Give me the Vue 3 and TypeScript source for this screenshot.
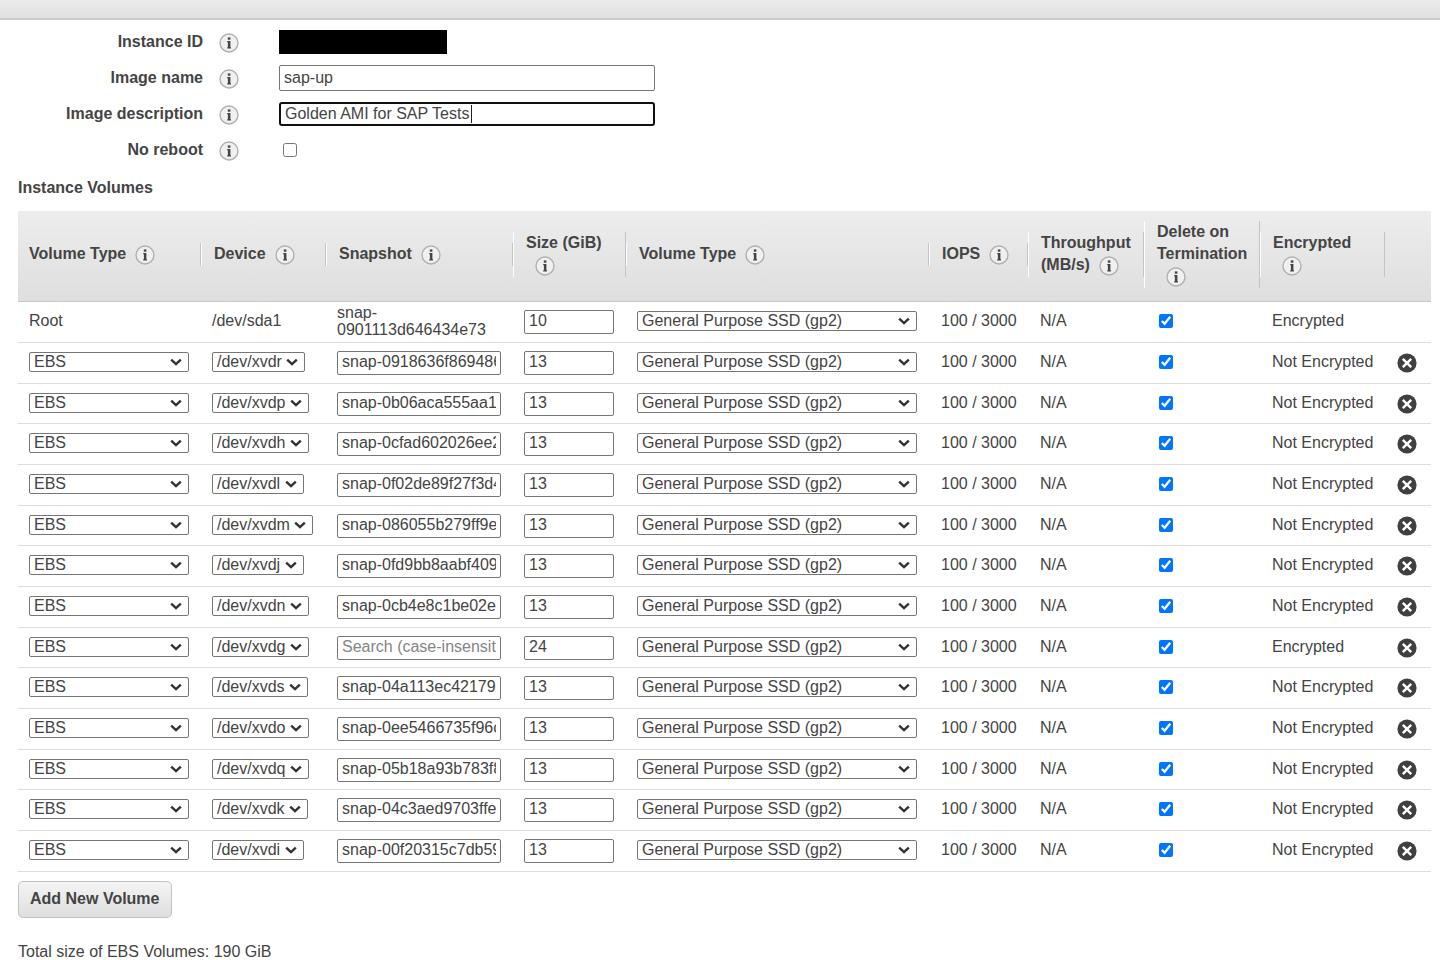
<script setup lang="ts">
import { computed, reactive, ref } from 'vue'

interface Column {
  key: string
  label: string
}

interface Volume {
  device: string
  snapshot: string
  size: string
  remove: boolean
  encrypted: string
}

const columns: Column[] = [
  { key: 'kind', label: 'Volume Type' },
  { key: 'device', label: 'Device' },
  { key: 'snapshot', label: 'Snapshot' },
  { key: 'size', label: 'Size (GiB)' },
  { key: 'type', label: 'Volume Type' },
  { key: 'iops', label: 'IOPS' },
  { key: 'throughput', label: 'Throughput (MB/s)' },
  { key: 'delete', label: 'Delete on Termination' },
  { key: 'encrypted', label: 'Encrypted' },
]

const ebs = (device: string, snapshot: string, size = '13', encrypted = 'Not Encrypted'): Volume => ({
  device,
  snapshot,
  size,
  remove: true,
  encrypted,
})

const root = reactive({ size: '10', remove: true })

const volumes = reactive<Volume[]>([
  ebs('/dev/xvdr', 'snap-0918636f869486'),
  ebs('/dev/xvdp', 'snap-0b06aca555aa1'),
  ebs('/dev/xvdh', 'snap-0cfad602026ee2'),
  ebs('/dev/xvdl', 'snap-0f02de89f27f3d4'),
  ebs('/dev/xvdm', 'snap-086055b279ff9e'),
  ebs('/dev/xvdj', 'snap-0fd9bb8aabf409'),
  ebs('/dev/xvdn', 'snap-0cb4e8c1be02e'),
  ebs('/dev/xvdg', '', '24', 'Encrypted'),
  ebs('/dev/xvds', 'snap-04a113ec42179'),
  ebs('/dev/xvdo', 'snap-0ee5466735f96c'),
  ebs('/dev/xvdq', 'snap-05b18a93b783f8'),
  ebs('/dev/xvdk', 'snap-04c3aed9703ffe'),
  ebs('/dev/xvdi', 'snap-00f20315c7db59'),
])

const imageName = ref('sap-up')
const description = ref('Golden AMI for SAP Tests')
const noReboot = ref(false)

// The caret is drawn at the end of the description text.
const pen = document.createElement('canvas').getContext('2d')
const caretOffset = computed(() => {
  if (!pen) return 0
  pen.font = '16px "Liberation Sans", Arial, sans-serif'
  return Math.round(pen.measureText(description.value).width)
})
</script>

<template>
  <svg class="symbols" aria-hidden="true">
    <symbol id="info" viewBox="0 0 20 20">
      <circle cx="10" cy="10" r="9" fill="#f0f0f0" stroke="#b0b0b0" stroke-width="1.4" />
      <path d="M8.2 8h3.2v6.2h.6v1.2H8.2v-1.2h.7V9.2h-.7z" fill="#444" />
      <rect x="8.8" y="4.4" width="2.6" height="2.3" fill="#444" />
    </symbol>
    <symbol id="chevron" viewBox="0 0 12 8">
      <path d="M1.2 1.6 6 6.2l4.8-4.6" fill="none" stroke="#333" stroke-width="2.4" />
    </symbol>
    <symbol id="remove" viewBox="0 0 20 20">
      <circle cx="10" cy="10" r="9.6" fill="#404040" />
      <path d="m5.8 5.8 8.4 8.4m0-8.4-8.4 8.4" stroke="#fff" stroke-width="2.4" />
    </symbol>
  </svg>

  <header class="topbar"></header>
  <main class="page">
    <form class="details" @submit.prevent>
      <span class="label">Instance ID</span>
      <svg class="info"><use href="#info" /></svg>
      <div class="entry"><span class="redacted"></span></div>

      <label class="label" for="image-name">Image name</label>
      <svg class="info"><use href="#info" /></svg>
      <div class="entry"><input id="image-name" v-model="imageName" class="text tall" type="text" /></div>

      <label class="label" for="image-description">Image description</label>
      <svg class="info"><use href="#info" /></svg>
      <div class="entry">
        <input id="image-description" v-model="description" class="text active" type="text" />
        <span class="caret" :style="{ marginLeft: caretOffset + 'px' }"></span>
      </div>

      <label class="label" for="no-reboot">No reboot</label>
      <svg class="info"><use href="#info" /></svg>
      <div class="entry"><input id="no-reboot" v-model="noReboot" class="check" type="checkbox" /></div>
    </form>

    <h2>Instance Volumes</h2>

    <table>
      <colgroup>
        <col v-for="c in columns" :key="c.key" :class="'col-' + c.key" />
        <col class="col-action" />
      </colgroup>
      <thead>
        <tr>
          <th v-for="c in columns" :key="c.key" scope="col">
            <div class="head">{{ c.label }}<svg class="info"><use href="#info" /></svg></div>
          </th>
          <td></td>
        </tr>
      </thead>
      <tbody>
        <tr>
          <td>Root</td>
          <td>/dev/sda1</td>
          <td class="wrap">snap-<br />0901113d646434e73</td>
          <td class="field"><input v-model="root.size" class="text" type="text" aria-label="Size of root" /></td>
          <td>
            <span class="select wide">
              <select aria-label="Volume type of root"><option>General Purpose SSD (gp2)</option></select>
              <svg><use href="#chevron" /></svg>
            </span>
          </td>
          <td class="plain">100 / 3000</td>
          <td class="plain">N/A</td>
          <td><input v-model="root.remove" class="check" type="checkbox" aria-label="Delete root on termination" /></td>
          <td class="plain">Encrypted</td>
          <td></td>
        </tr>
        <tr v-for="(v, i) in volumes" :key="v.device">
          <td>
            <span class="select wide">
              <select :aria-label="'Kind of ' + v.device"><option>EBS</option></select>
              <svg><use href="#chevron" /></svg>
            </span>
          </td>
          <td>
            <span class="select">
              <select :aria-label="'Device ' + v.device"><option>{{ v.device }}</option></select>
              <svg><use href="#chevron" /></svg>
            </span>
          </td>
          <td class="field">
            <input
              v-model="v.snapshot"
              class="text"
              type="text"
              placeholder="Search (case-insensitive)"
              :aria-label="'Snapshot of ' + v.device"
            />
          </td>
          <td class="field"><input v-model="v.size" class="text" type="text" :aria-label="'Size of ' + v.device" /></td>
          <td>
            <span class="select wide">
              <select :aria-label="'Volume type of ' + v.device"><option>General Purpose SSD (gp2)</option></select>
              <svg><use href="#chevron" /></svg>
            </span>
          </td>
          <td class="plain">100 / 3000</td>
          <td class="plain">N/A</td>
          <td>
            <input v-model="v.remove" class="check" type="checkbox" :aria-label="'Delete ' + v.device + ' on termination'" />
          </td>
          <td class="plain">{{ v.encrypted }}</td>
          <td class="field">
            <button class="remove" type="button" :aria-label="'Remove ' + v.device" @click="volumes.splice(i, 1)">
              <svg><use href="#remove" /></svg>
            </button>
          </td>
        </tr>
      </tbody>
    </table>

    <button class="add" type="button">Add New Volume</button>
    <p class="total">Total size of EBS Volumes: 190 GiB</p>
  </main>
</template>

<style>
body {
  background: #fff;
}
</style>

<style scoped>
.symbols {
  position: absolute;
  width: 0;
  height: 0;
}

.topbar {
  height: 18px;
  border-bottom: 2px solid #cbcbcb;
  background: linear-gradient(#ebebeb, #e0e0e0);
}

.page,
.page input,
.page select,
.page button {
  font-family: 'Liberation Sans', Arial, sans-serif;
  font-size: 16px;
  line-height: 18px;
  color: #444;
}

.page {
  padding: 4px 9px 0 18px;
}

.details {
  display: grid;
  grid-template-columns: 185px 20px minmax(0, 400px);
  grid-auto-rows: 36px;
  column-gap: 16px;
  align-items: center;
}

.details .info {
  margin-top: 2px;
}

.entry {
  display: grid;
  align-items: center;
  padding-left: 24px;
}

.label {
  text-align: right;
  font-weight: bold;
}

.info {
  width: 20px;
  height: 20px;
}

.redacted {
  width: 168px;
  height: 24px;
  background: #000;
}

.text {
  box-sizing: border-box;
  display: block;
  width: 100%;
  height: 24px;
  margin: 0;
  padding: 1px 4px 3px;
  border: 1px solid #767676;
  border-radius: 2px;
  background: #fff;
  outline: none;
}

.text::placeholder {
  color: #858585;
}

.text.tall {
  height: 26px;
  padding: 3px 4px;
}

.text.active {
  grid-area: 1 / 1;
  padding: 1px 4px;
  border: 2px solid #101010;
  border-radius: 3px;
}

.caret {
  grid-area: 1 / 1;
  width: 1px;
  height: 18px;
  border-left: 6px solid transparent;
  background: #222;
  background-clip: padding-box;
  pointer-events: none;
}

.check {
  display: block;
  width: 14px;
  height: 14px;
  margin: 0 0 0 4px;
}

h2 {
  margin: 11px 0 14px;
  font-size: 16px;
  line-height: 18px;
}

table {
  width: 100%;
  table-layout: fixed;
  border-collapse: separate;
  border-spacing: 0;
}

.col-kind {
  width: 183px;
}

.col-device,
.col-encrypted {
  width: 125px;
}

.col-snapshot {
  width: 187px;
}

.col-size {
  width: 113px;
}

.col-iops {
  width: 99px;
}

.col-throughput,
.col-delete {
  width: 116px;
}

.col-action {
  width: 46px;
}

thead {
  background: linear-gradient(#ededed, #dedede);
}

thead tr {
  height: 91px;
}

thead th,
thead td {
  padding: 0 0 3px;
  border-bottom: 1px solid #c8c8c8;
  text-align: left;
}

.head {
  padding: 0 9px 1px 12px;
  border-left: 1px solid #fff;
  border-right: 1px solid #c4c4c4;
  line-height: 22px;
}

th:first-child .head {
  padding-left: 10px;
  border-left-color: transparent;
}

.head .info {
  margin: 0 0 -1px 9px;
  vertical-align: -5px;
}

tbody tr {
  height: 41px;
}

tbody tr:nth-child(3n) {
  height: 40px;
}

tbody td {
  padding: 0 12px 2px 11px;
  border-bottom: 1px solid #dedede;
  white-space: nowrap;
}

tbody td.field {
  padding-bottom: 0;
}

tbody td.plain {
  padding-left: 12px;
}

td.wrap {
  line-height: 17px;
}

.select {
  display: inline-grid;
  align-items: center;
  vertical-align: top;
}

.select.wide {
  display: grid;
}

.select select {
  grid-area: 1 / 1;
  box-sizing: border-box;
  height: 20px;
  margin: 0;
  padding: 0 22px 0 4px;
  border: 1px solid #767676;
  border-radius: 2px;
  background: #fff;
  appearance: none;
}

.select svg {
  grid-area: 1 / 1;
  justify-self: end;
  width: 12px;
  height: 8px;
  margin-right: 7px;
  pointer-events: none;
}

.remove {
  display: block;
  width: 20px;
  height: 20px;
  margin: 0 0 0 1px;
  padding: 0;
  border: 0;
  background: none;
}

.remove svg {
  display: block;
  width: 20px;
  height: 20px;
}

.page .add {
  display: block;
  margin: 9px 0 0;
  padding: 8px 11px 9px;
  border: 1px solid #c2c2c2;
  border-radius: 5px;
  background: linear-gradient(#f4f4f4, #dfdfdf);
  font-weight: bold;
}

.total {
  margin: 25px 0 0;
  line-height: 17px;
}
</style>
